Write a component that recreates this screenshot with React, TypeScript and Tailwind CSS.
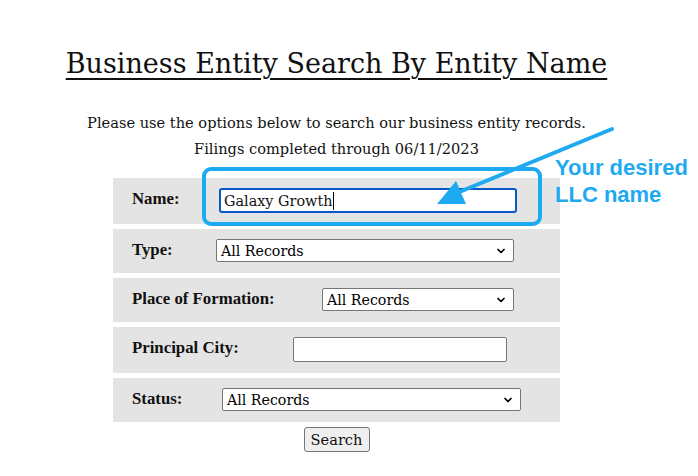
import { ChevronDown } from 'lucide-react';

const SERIF = 'font-["DejaVu_Serif","Liberation_Serif",serif]';

function FakeSelect({ width }: { width: string }) {
  return (
    <div
      className={`${width} h-[23px] border border-[#767676] rounded-[2px] bg-white flex items-center justify-between pl-[4px] pr-[6px] pt-[2px] text-[14.2px] leading-none text-black`}
    >
      <span>All Records</span>
      <ChevronDown className="w-[12px] h-[12px] -mt-[2px]" strokeWidth={3.5} />
    </div>
  );
}

function Row({ label, labelW, tall, children }: { label: string; labelW: string; tall?: boolean; children: React.ReactNode }) {
  return (
    <div className={`bg-[#e4e4e4] flex items-start pl-[19px] pt-[10px] ${tall ? 'h-[46px]' : 'h-[44px]'}`}>
      <div className={`${labelW} shrink-0 text-left font-['Liberation_Serif',serif] font-bold text-[16.8px] leading-[20px] pt-[1px]`}>
        {label}
      </div>
      {children}
    </div>
  );
}

export default function App() {
  return (
    <div className={`relative w-[698px] h-[476px] bg-white text-[#111] ${SERIF}`}>
      <div className="w-[673px] pt-[46px] text-center">
        <h1 className="text-[27px] leading-[36px] underline decoration-2 underline-offset-[5px]">
          Business Entity Search By Entity Name
        </h1>

        <div className="mt-[28px] text-[14.6px] leading-[26px]">
          <p>Please use the options below to search our business entity records.</p>
          <p>Filings completed through 06/11/2023</p>
        </div>

        <form className="mt-[16px] w-[447px] mx-auto flex flex-col gap-[5px]">
          <Row label="Name:" labelW="w-[87px]" tall>
            <div className="w-[298px] h-[25px] border-2 border-[#0a57c8] rounded-[3px] bg-white flex items-center pl-[3px] pt-[2px] text-[14.4px] leading-none">
              <span>Galaxy Growth</span>
              <span className="w-px h-[18px] bg-black -mt-[2px]" />
            </div>
          </Row>
          <Row label="Type:" labelW="w-[84px]">
            <FakeSelect width="w-[298px]" />
          </Row>
          <Row label="Place of Formation:" labelW="w-[190px]">
            <FakeSelect width="w-[192px]" />
          </Row>
          <Row label="Principal City:" labelW="w-[161px]" tall>
            <div className="w-[214px] h-[25px] border border-[#767676] rounded-[2px] bg-white" />
          </Row>
          <Row label="Status:" labelW="w-[90px]">
            <FakeSelect width="w-[299px]" />
          </Row>
          <div className="flex justify-center">
            <button
              type="button"
              className="w-[66px] h-[25px] border border-[#767676] rounded-[3px] bg-[#efefef] text-[14.6px] leading-none pt-[1px]"
            >
              Search
            </button>
          </div>
        </form>
      </div>

      {/* annotation */}
      <div className="absolute left-[202px] top-[167px] w-[340px] h-[59px] border-4 border-[#1eaaf1] rounded-[9px]" />
      <svg className="absolute left-0 top-0" width="698" height="476" viewBox="0 0 698 476">
        <line x1="612" y1="129" x2="452" y2="195" stroke="#1eaaf1" strokeWidth="4" strokeLinecap="round" />
        <polygon points="437,204 456,181 466,204" fill="#1eaaf1" />
      </svg>
      <div className="absolute left-[555px] top-[154px] font-['Liberation_Sans',Arial,sans-serif] font-bold text-[22px] leading-[27px] text-[#1eaaf1] text-left">
        <div>Your desired</div>
        <div>LLC name</div>
      </div>
    </div>
  );
}
